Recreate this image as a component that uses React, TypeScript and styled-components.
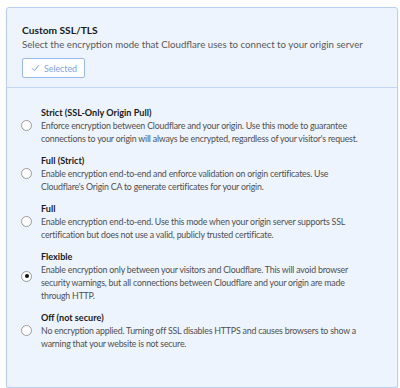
import styled, { createGlobalStyle } from "styled-components";

const GlobalStyle = createGlobalStyle`
	html, body {
		margin: 0;
		padding: 0;
		background: #ffffff;
	}
	body {
		font-family: Lato, "Noto Sans", Arial, sans-serif;
		color: #1d1d1d;
	}
`;

type ModeType = {
	title: string;
	text: string;
	checked?: boolean;
};

const modes: ModeType[] = [
	{
		title: "Strict (SSL-Only Origin Pull)",
		text: "Enforce encryption between Cloudflare and your origin. Use this mode to guarantee connections to your origin will always be encrypted, regardless of your visitor's request.",
	},
	{
		title: "Full (Strict)",
		text: "Enable encryption end-to-end and enforce validation on origin certificates. Use Cloudflare's Origin CA to generate certificates for your origin.",
	},
	{
		title: "Full",
		text: "Enable encryption end-to-end. Use this mode when your origin server supports SSL certification but does not use a valid, publicly trusted certificate.",
	},
	{
		title: "Flexible",
		text: "Enable encryption only between your visitors and Cloudflare. This will avoid browser security warnings, but all connections between Cloudflare and your origin are made through HTTP.",
		checked: true,
	},
	{
		title: "Off (not secure)",
		text: "No encryption applied. Turning off SSL disables HTTPS and causes browsers to show a warning that your website is not secure.",
	},
];

export default function App() {
	return (
		<Page>
			<GlobalStyle />
			<Card>
				<Header>
					<Title>Custom SSL/TLS</Title>
					<Subtitle>Select the encryption mode that Cloudflare uses to connect to your origin server</Subtitle>
					<SelectedButton>
						<svg width="9" height="8" viewBox="0 0 9 8" fill="none">
							<path d="M1 4.2 L3.4 6.6 L8 1.2" stroke="#7aa2e8" strokeWidth="1" />
						</svg>
						Selected
					</SelectedButton>
				</Header>
				<ModeList>
					{modes.map((m) => (
						<Mode key={m.title}>
							<Radio $checked={!!m.checked} />
							<ModeBody>
								<ModeTitle>{m.title}</ModeTitle>
								<ModeText>{m.text}</ModeText>
							</ModeBody>
						</Mode>
					))}
				</ModeList>
			</Card>
		</Page>
	);
}

const Page = styled.div`
	padding: 7px 2px 6px 6px;
`;

const Card = styled.div`
	background: #eef4fe;
	border: 1px solid #b9cff3;
	border-radius: 3px;
	box-shadow: 0 1px 1px rgba(120, 150, 200, 0.35);
`;

const Header = styled.div`
	padding: 15px 15px 9px;
	border-bottom: 1px solid #c3d6f4;
`;

const Title = styled.h3`
	margin: 0;
	font-size: 10.2px;
	font-weight: 700;
	line-height: 14px;
	color: #1a1a1a;
`;

const Subtitle = styled.p`
	margin: 0 0 5px;
	font-size: 9.7px;
	line-height: 14px;
	color: #585858;
	white-space: nowrap;
`;

const SelectedButton = styled.button`
	display: inline-flex;
	align-items: center;
	gap: 4px;
	height: 20px;
	padding: 0 7px 0 8px;
	background: #ffffff;
	border: 1px solid #9ab9f0;
	border-radius: 2px;
	font-family: inherit;
	font-size: 8.8px;
	color: #7aa2e8;
`;

const ModeList = styled.div`
	display: flex;
	flex-direction: column;
	gap: 9px;
	padding: 18px 10px 37px 14px;
`;

const Mode = styled.div`
	display: flex;
	align-items: center;
	gap: 9px;
`;

const Radio = styled.span<{ $checked: boolean }>`
	flex: none;
	position: relative;
	box-sizing: border-box;
	width: 11px;
	height: 11px;
	border-radius: 50%;
	border: 1px solid #9a9a9a;
	background: #ffffff;

	&::after {
		content: "";
		display: ${(p) => (p.$checked ? "block" : "none")};
		position: absolute;
		left: 2.5px;
		top: 2.5px;
		width: 4px;
		height: 4px;
		border-radius: 50%;
		background: #111111;
	}
`;

const ModeBody = styled.div`
	display: flex;
	flex-direction: column;
	max-width: 330px;
`;

const ModeTitle = styled.div`
	font-size: 9.1px;
	font-weight: 700;
	line-height: 13px;
	color: #1a1a1a;
`;

const ModeText = styled.p`
	margin: 0;
	font-size: 8.8px;
	letter-spacing: -0.2px;
	line-height: 13px;
	color: #4f4f4f;
`;
